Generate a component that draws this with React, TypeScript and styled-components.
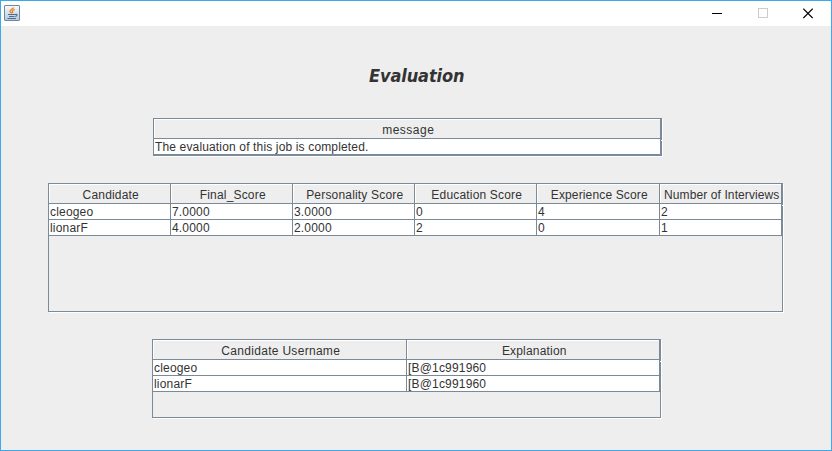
import React from 'react';
import styled, { createGlobalStyle } from 'styled-components';

const LINE = '#7a8a99';
const FACE = '#eeeeee';

const GlobalStyle = createGlobalStyle`
  * { box-sizing: border-box; }
  body { margin: 0; overflow: hidden; }
`;

const Window = styled.div`
  width: 832px;
  height: 451px;
  border: 1px solid #3ca9ea;
  background: ${FACE};
  display: flex;
  flex-direction: column;
  font: 12px/15px 'Liberation Sans', Arial, sans-serif;
  color: #333333;
`;

const TitleBar = styled.header`
  height: 25px;
  flex: none;
  background: #ffffff;
  display: flex;
  justify-content: space-between;
  padding: 4px 0 0 3px;
`;

const Controls = styled.div`
  display: flex;
  margin-top: -4px;
`;

const ControlButton = styled.button`
  width: 46px;
  height: 25px;
  padding: 0;
  border: 0;
  background: none;
  display: flex;
  align-items: center;
  justify-content: center;
  &:nth-child(2) { width: 45px; }
`;

const Content = styled.main`
  display: flex;
  flex-direction: column;
  align-items: flex-start;
`;

const Heading = styled.h1`
  margin: 37px 0 30px 368px;
  height: 25px;
  font: italic 700 18px/25px 'DejaVu Sans Condensed', 'DejaVu Sans', sans-serif;
  font-stretch: condensed;
  letter-spacing: -0.1px;
`;

const Frame = styled.section<{ $left: number; $height: number; $gap?: number }>`
  position: relative;
  margin-left: ${(p) => p.$left}px;
  margin-bottom: ${(p) => p.$gap ?? 0}px;
  height: ${(p) => p.$height}px;
  border: 1px solid ${LINE};
  box-shadow: 1px 1px 0 #ffffff;
  &::after {
    content: '';
    position: absolute;
    top: 21px;
    right: -1px;
    width: 1px;
    height: 1px;
    background: #ffffff;
  }
`;

const Row = styled.div<{ $columns: string }>`
  display: grid;
  grid-template-columns: ${(p) => p.$columns};
`;

const HeaderCell = styled.div<{ $spacing: number }>`
  height: 20px;
  border-right: 1px solid ${LINE};
  border-bottom: 1px solid ${LINE};
  box-shadow: inset 1px 1px 0 #ffffff;
  padding-top: 4px;
  padding-left: 2.5px;
  text-align: center;
  white-space: nowrap;
  letter-spacing: ${(p) => p.$spacing}px;
`;

const Cell = styled.div<{ $spacing: number }>`
  height: 16px;
  border-right: 1px solid ${LINE};
  border-bottom: 1px solid ${LINE};
  background: #ffffff;
  padding-left: 1px;
  line-height: 17px;
  white-space: nowrap;
  letter-spacing: ${(p) => p.$spacing}px;
`;

type Entry = [text: string, spacing?: number];

interface TableProps {
  left: number;
  height: number;
  gap?: number;
  columns: string;
  head: Entry[];
  rows: Entry[][];
}

function Table({ left, height, gap, columns, head, rows }: TableProps) {
  return (
    <Frame $left={left} $height={height} $gap={gap}>
      <Row $columns={columns}>
        {head.map(([text, spacing = 0.18]) => (
          <HeaderCell key={text} $spacing={spacing}>{text}</HeaderCell>
        ))}
      </Row>
      {rows.map((row) => (
        <Row key={row[0][0]} $columns={columns}>
          {row.map(([text, spacing = 0.18], i) => (
            <Cell key={i} $spacing={spacing}>{text}</Cell>
          ))}
        </Row>
      ))}
    </Frame>
  );
}

function JavaIcon() {
  return (
    <svg width="16" height="16" viewBox="0 0 16 16" fill="none">
      <defs>
        <linearGradient id="tile" x1="0" y1="0" x2="0" y2="1">
          <stop offset="0" stopColor="#f8fbfd" />
          <stop offset="1" stopColor="#b4c8da" />
        </linearGradient>
      </defs>
      <rect x=".5" y=".5" width="15" height="15" rx=".5" fill="url(#tile)" stroke="#71879b" />
      <path d="M9.500 2.500C9.500 4.200 5.500 4.800 6 6.500c.3.900 1.500 1.200 1.700 2M10.800 4.500C8.500 5.300 7.800 6 8.800 8" stroke="#ee7d17" strokeWidth="1.300" />
      <path d="M4 9.500h7.500M5 11.500h5.500M3.500 13.500h8.500M11.500 9.500c2.200-.8 2.200 1.700-.3 2" stroke="#436f98" strokeWidth="1.100" />
    </svg>
  );
}

export default function App() {
  return (
    <>
      <GlobalStyle />
      <Window>
        <TitleBar>
          <JavaIcon />
          <Controls>
            <ControlButton aria-label="Minimize">
              <svg width="10" height="11" shapeRendering="crispEdges"><path d="M0 5.500h10" stroke="#000" /></svg>
            </ControlButton>
            <ControlButton aria-label="Maximize">
              <svg width="10" height="11" shapeRendering="crispEdges"><rect x=".5" y=".5" width="9" height="9" fill="none" stroke="#ccc" /></svg>
            </ControlButton>
            <ControlButton aria-label="Close">
              <svg width="10" height="11"><path d="M.3.6l9.400 9.400M9.700.6L.3 10" stroke="#000" strokeWidth="1.200" /></svg>
            </ControlButton>
          </Controls>
        </TitleBar>
        <Content>
          <Heading>Evaluation</Heading>
          <Table
            left={152}
            height={38}
            gap={27}
            columns="507px"
            head={[['message', 0.5]]}
            rows={[[['The evaluation of this job is completed.', 0.15]]]}
          />
          <Table
            left={47}
            height={129}
            gap={27}
            columns="122px 122px 122px 122px 123px 122px"
            head={[['Candidate'], ['Final_Score'], ['Personality Score'], ['Education Score'], ['Experience Score', 0.14], ['Number of Interviews', 0.1]]}
            rows={[
              [['cleogeo'], ['7.0000'], ['3.0000'], ['0'], ['4'], ['2']],
              [['lionarF'], ['4.0000'], ['2.0000'], ['2'], ['0'], ['1']],
            ]}
          />
          <Table
            left={151}
            height={79}
            columns="254px 253px"
            head={[['Candidate Username', 0.3], ['Explanation']]}
            rows={[
              [['cleogeo'], ['[B@1c991960']],
              [['lionarF'], ['[B@1c991960']],
            ]}
          />
        </Content>
      </Window>
    </>
  );
}
